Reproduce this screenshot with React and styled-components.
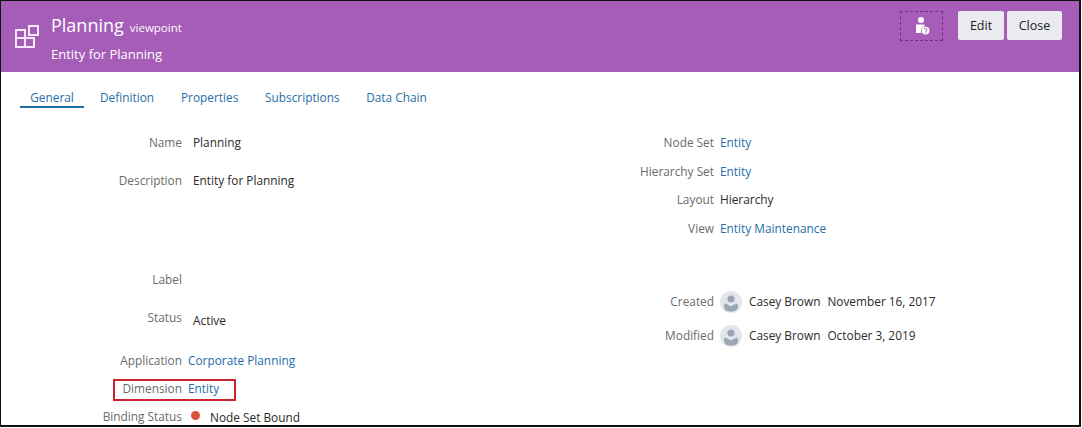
import React from "react";
import styled, { createGlobalStyle } from "styled-components";

const GlobalStyle = createGlobalStyle`
	html, body {
		margin: 0;
		padding: 0;
		background: #fff;
	}
	body {
		font-family: "Open Sans", "Liberation Sans", sans-serif;
		font-size: 11.85px;
	}
`;

const Frame = styled.div`
	box-sizing: border-box;
	width: 1081px;
	height: 427px;
	border: 1px solid #111;
	border-width: 1px 2px 2px 1px;
	overflow: hidden;
	background: #fff;
`;

const Header = styled.header`
	box-sizing: border-box;
	height: 71px;
	background: #a55db7;
	display: flex;
	align-items: flex-start;
	color: #fff;
	padding: 0 17px 0 14px;
`;

const Logo = styled.svg`
	width: 26px;
	height: 26px;
	margin-top: 23px;
	flex: none;
`;

const Titles = styled.div`
	margin-left: 10px;
	padding-top: 10px;
	flex: 1;
`;

const TitleLine = styled.div`
	display: flex;
	align-items: baseline;
	gap: 6px;
	height: 29px;
`;

const Title = styled.span`
	font-size: 18px;
	line-height: 29px;
`;

const TitleKind = styled.span`
	font-size: 11.5px;
`;

const Subtitle = styled.div`
	font-size: 13px;
	line-height: 18px;
	margin-top: 5px;
`;

const Actions = styled.div`
	display: flex;
	align-items: flex-start;
	padding-top: 10px;
`;

const HelpButton = styled.button`
	box-sizing: border-box;
	width: 43px;
	height: 30px;
	margin-right: 15px;
	padding: 0;
	border: 1px dashed #6f3083;
	background: transparent;
	display: flex;
	align-items: center;
	justify-content: center;
`;

const Button = styled.button`
	box-sizing: border-box;
	height: 29px;
	width: ${(p) => p.$width}px;
	margin-left: ${(p) => p.$gap || 0}px;
	padding: 0;
	border: none;
	border-radius: 2px;
	background: #e9ebf0;
	color: #222;
	font-family: inherit;
	font-size: 12.5px;
`;

const Tabs = styled.nav`
	display: flex;
	padding: 16px 0 0 19px;
	height: 19px;
`;

const Tab = styled.a`
	box-sizing: border-box;
	height: 20px;
	margin-right: ${(p) => p.$gap}px;
	width: ${(p) => p.$width}px;
	font-size: 11.85px;
	line-height: 18px;
	white-space: nowrap;
	text-align: center;
	color: #1f6ea8;
	border-bottom: ${(p) => (p.$active ? "2px solid #1f6ea8" : "none")};
`;

const Columns = styled.div`
	display: flex;
	padding-top: 26px;
`;

const LeftColumn = styled.div`
	width: 533px;
`;

const RightColumn = styled.div`
	flex: 1;
`;

const Row = styled.div`
	display: flex;
	align-items: flex-start;
	height: ${(p) => p.$height}px;
	line-height: 18px;
`;

const Label = styled.div`
	width: ${(p) => p.$width}px;
	flex: none;
	text-align: right;
	color: #6b6b6b;
	white-space: nowrap;
`;

const Value = styled.div`
	margin-left: ${(p) => p.$indent}px;
	margin-top: ${(p) => p.$drop || 0}px;
	color: #2b2b2b;
	white-space: nowrap;
`;

const LinkValue = styled(Value)`
	color: #1f6ea8;
`;

const Highlight = styled.div`
	position: relative;
	&::after {
		content: "";
		position: absolute;
		left: 112px;
		top: 0;
		width: 119px;
		height: 18px;
		border: 2px solid #c9252c;
	}
`;

const StatusDot = styled.span`
	width: 9px;
	height: 9px;
	border-radius: 50%;
	background: #dc5039;
	margin: 4px 10px 0 9px;
	flex: none;
`;

const Person = styled.div`
	display: flex;
	align-items: flex-start;
	margin-left: 6px;
	color: #2b2b2b;
	white-space: nowrap;
`;

const Avatar = styled.svg`
	width: 22px;
	height: 22px;
	margin: -1px 7px 0 0;
	flex: none;
`;

const PersonDate = styled.span`
	margin-left: 7px;
`;

const AvatarIcon = () => (
	<Avatar viewBox="0 0 22 22">
		<circle cx="11" cy="11" r="11" fill="#e3e6ea" />
		<circle cx="11" cy="8" r="3.6" fill="#9aa6b4" />
		<path d="M4.5 12.5 C7 13 9 14 11 15.5 C13 14 15 13 17.5 12.5 C18.5 15 18 18 16 19.5 C14 21 8 21 6 19.5 C4 18 3.5 15 4.5 12.5 Z" fill="#9aa6b4" />
	</Avatar>
);

const tabs = [
	{ name: "General", width: 64, gap: 16, active: true },
	{ name: "Definition", width: 54, gap: 27 },
	{ name: "Properties", width: 57, gap: 27 },
	{ name: "Subscriptions", width: 74, gap: 27 },
	{ name: "Data Chain", width: 61, gap: 0 },
];

export default function App() {
	return (
		<Frame>
			<GlobalStyle />
			<Header>
				<Logo viewBox="0 0 26 26" fill="none" stroke="#f7e9fa" strokeWidth="2">
					<rect x="1" y="6" width="9" height="8" />
					<rect x="1" y="14" width="9" height="9" />
					<rect x="10" y="14" width="9" height="9" />
					<rect x="14" y="2" width="9" height="9" />
				</Logo>
				<Titles>
					<TitleLine>
						<Title>Planning</Title>
						<TitleKind>viewpoint</TitleKind>
					</TitleLine>
					<Subtitle>Entity for Planning</Subtitle>
				</Titles>
				<Actions>
					<HelpButton aria-label="Help">
						<svg width="16" height="18" viewBox="0 0 16 18">
							<circle cx="7" cy="3" r="3" fill="#fff" />
							<path d="M2 7.5 H10.5 V9.6 A4.6 4.6 0 0 0 7.4 16 H2 Z" fill="#fff" />
							<circle cx="11.6" cy="13.6" r="3.9" fill="#fff" />
							<path d="M10.2 12.6 A1.4 1.3 0 1 1 12 13.9 Q11.6 14.2 11.6 15" fill="none" stroke="#a55db7" strokeWidth="1" />
							<rect x="11.1" y="15.5" width="1" height="1" fill="#a55db7" />
						</svg>
					</HelpButton>
					<Button $width={46}>Edit</Button>
					<Button $width={55} $gap={3}>Close</Button>
				</Actions>
			</Header>
			<Tabs>
				{tabs.map((tab) => (
					<Tab key={tab.name} $width={tab.width} $gap={tab.gap} $active={tab.active}>
						{tab.name}
					</Tab>
				))}
			</Tabs>
			<Columns>
				<LeftColumn>
					<Row $height={38}>
						<Label $width={181}>Name</Label>
						<Value $indent={11}>Planning</Value>
					</Row>
					<Row $height={99}>
						<Label $width={181}>Description</Label>
						<Value $indent={11}>Entity for Planning</Value>
					</Row>
					<Row $height={38}>
						<Label $width={181}>Label</Label>
					</Row>
					<Row $height={43}>
						<Label $width={181}>Status</Label>
						<Value $indent={11} $drop={3}>Active</Value>
					</Row>
					<Row $height={28}>
						<Label $width={181}>Application</Label>
						<LinkValue $indent={6}>Corporate Planning</LinkValue>
					</Row>
					<Highlight>
						<Row $height={28}>
							<Label $width={181}>Dimension</Label>
							<LinkValue $indent={6}>Entity</LinkValue>
						</Row>
					</Highlight>
					<Row $height={20}>
						<Label $width={181}>Binding Status</Label>
						<StatusDot />
						<Value $indent={0} $drop={1}>Node Set Bound</Value>
					</Row>
				</LeftColumn>
				<RightColumn>
					<Row $height={28.5}>
						<Label $width={180}>Node Set</Label>
						<LinkValue $indent={6}>Entity</LinkValue>
					</Row>
					<Row $height={28}>
						<Label $width={180}>Hierarchy Set</Label>
						<LinkValue $indent={6}>Entity</LinkValue>
					</Row>
					<Row $height={29}>
						<Label $width={180}>Layout</Label>
						<Value $indent={6}>Hierarchy</Value>
					</Row>
					<Row $height={73}>
						<Label $width={180}>View</Label>
						<LinkValue $indent={6}>Entity Maintenance</LinkValue>
					</Row>
					<Row $height={34}>
						<Label $width={180}>Created</Label>
						<Person>
							<AvatarIcon />
							Casey Brown
							<PersonDate>November 16, 2017</PersonDate>
						</Person>
					</Row>
					<Row $height={30}>
						<Label $width={180}>Modified</Label>
						<Person>
							<AvatarIcon />
							Casey Brown
							<PersonDate>October 3, 2019</PersonDate>
						</Person>
					</Row>
				</RightColumn>
			</Columns>
		</Frame>
	);
}
